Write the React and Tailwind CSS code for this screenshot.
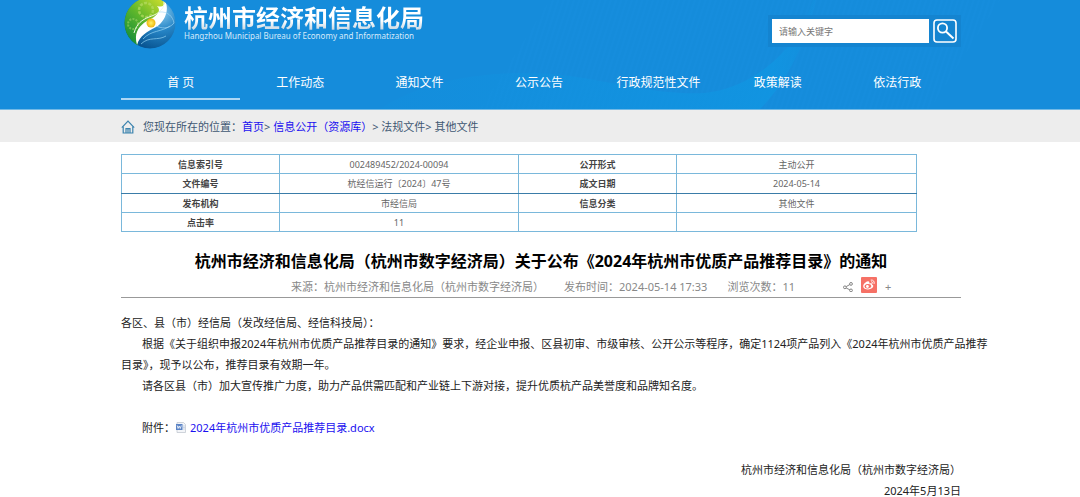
import React, { useState } from 'react';

const NAV_ITEMS = [
  '首 页',
  '工作动态',
  '通知文件',
  '公示公告',
  '行政规范性文件',
  '政策解读',
  '依法行政',
];

const INFO_ROWS = [
  ['信息索引号', '002489452/2024-00094', '公开形式', '主动公开'],
  ['文件编号', '杭经信运行〔2024〕47号', '成文日期', '2024-05-14'],
  ['发布机构', '市经信局', '信息分类', '其他文件'],
  ['点击率', '11', '', ''],
];

function HeaderWaves() {
  return (
    <svg
      className="absolute inset-0 w-full h-full"
      viewBox="0 0 1080 109"
      preserveAspectRatio="none"
      aria-hidden="true"
    >
      <defs>
        <pattern id="stripes" width="5" height="5" patternUnits="userSpaceOnUse" patternTransform="rotate(18)">
          <path d="M1 0V5" stroke="#1d96e2" strokeWidth="1" opacity="0.25" />
        </pattern>
        <linearGradient id="wave" x1="0" x2="1" y1="0" y2="0">
          <stop offset="0" stopColor="#1093e0" stopOpacity="0.2" />
          <stop offset="0.9" stopColor="#1096e2" stopOpacity="0.8" />
          <stop offset="1" stopColor="#1096e2" stopOpacity="0.2" />
        </linearGradient>
      </defs>
      <path d="M550 0H1000L930 109H480Z" fill="url(#stripes)" />
      <path
        d="M380 109C430 75 510 68 570 76C630 85 660 95 705 93C750 88 795 55 813 0H816C808 40 785 85 760 109Z"
        fill="url(#wave)"
      />
    </svg>
  );
}

function Logo() {
  return (
    <svg className="w-[52px] h-[52px] flex-none" viewBox="0 0 52 52" aria-hidden="true">
      <defs>
        <radialGradient id="blueBall" cx="0.72" cy="0.3" r="0.75">
          <stop offset="0" stopColor="#86c9ee" />
          <stop offset="0.45" stopColor="#2685c6" />
          <stop offset="1" stopColor="#075390" />
        </radialGradient>
        <linearGradient id="greenLeaf" x1="0.8" x2="0.1" y1="0" y2="0.9">
          <stop offset="0" stopColor="#c5db2c" />
          <stop offset="0.5" stopColor="#5cb52b" />
          <stop offset="1" stopColor="#128c3b" />
        </linearGradient>
        <radialGradient id="sun">
          <stop offset="0" stopColor="#fff36a" />
          <stop offset="1" stopColor="#f0b50c" />
        </radialGradient>
        <clipPath id="ball">
          <circle cx="26" cy="26" r="25.5" />
        </clipPath>
      </defs>
      <g clipPath="url(#ball)">
        <circle cx="26" cy="26" r="26" fill="url(#blueBall)" />
        <path d="M40 0C45 10 40 17 31 21C18 27 12 34 14 50L0 46V0Z" fill="url(#greenLeaf)" />
        <circle cx="22" cy="13" r="7" fill="none" stroke="#b7dc63" strokeWidth="2.5" strokeDasharray="3 1.4" opacity="0.7" />
        <circle cx="9" cy="27" r="5" fill="none" stroke="#9dd264" strokeWidth="2" strokeDasharray="2 1.2" opacity="0.6" />
        <path d="M40 2C47 12 40 26 32 30C23 35 16 38 13 48C9 34 17 27 25 23C37 17 36 12 33 9C39 11 42 8 40 2Z" fill="#fff" />
        <path d="M40 4C41 14 31 18 25 20C18 23 13 26 10 36" fill="none" stroke="#eef8e4" strokeWidth="1" />
        <path d="M46 29C38 35 27 33 19 42M42 39C34 44 25 39 17 47" fill="none" stroke="#8fcff1" strokeWidth="0.9" opacity="0.8" />
        <path d="M35 15C44 14 49 20 50 26C44 33 37 31 32 29" fill="none" stroke="#a5daf5" strokeWidth="0.8" opacity="0.8" />
      </g>
      <circle cx="27" cy="26" r="4.5" fill="url(#sun)" />
    </svg>
  );
}

function HomeIcon() {
  return (
    <svg
      className="w-[14px] h-[14px] flex-none"
      viewBox="0 0 14 14"
      fill="none"
      stroke="#3b83ae"
      strokeWidth="1.2"
      aria-hidden="true"
    >
      <path d="M0.8 7.6L7 1.2L13.2 7.6" />
      <path d="M2.2 6.5V13H11.8V6.5" />
      <path d="M5 13V8.6H9V13M7 9V13" />
    </svg>
  );
}

function ShareIcon() {
  return (
    <svg className="w-[10px] h-[10px]" viewBox="0 0 10 10" fill="none" stroke="#777" strokeWidth="0.9" aria-hidden="true">
      <path d="M3.2 4.6L6.8 2.6M3.2 6L6.8 7.8" />
      <circle cx="1.9" cy="5.3" r="1.4" />
      <circle cx="8" cy="1.9" r="1.4" />
      <circle cx="8" cy="8.4" r="1.4" />
    </svg>
  );
}

function WeiboIcon() {
  return (
    <svg className="w-4 h-4" viewBox="0 0 16 16" aria-hidden="true">
      <rect width="16" height="16" rx="1" fill="#f67166" />
      <path
        d="M6.9 4.2C5 4.5 2.2 7.1 2.2 9.2C2.2 11.3 4.6 12.4 7 12.4C10.2 12.4 12.3 10.7 12.3 9.1C12.3 8.2 11.6 7.8 10.9 7.5C11.3 6.3 10.4 5.9 8.3 6.5C8.6 5.2 8.3 4 6.9 4.2Z"
        fill="#fff"
      />
      <ellipse cx="6.9" cy="9.3" rx="3.4" ry="2.2" fill="#f67166" transform="rotate(-8 6.9 9.3)" />
      <circle cx="6.4" cy="9.5" r="1.4" fill="#fff" />
      <path d="M9.7 3.1C12 2.6 13.8 4.4 13.1 6.9M10 4.9C11.3 4.6 11.9 5.4 11.6 6.5" fill="none" stroke="#fff" strokeWidth="0.9" />
    </svg>
  );
}

function DocIcon() {
  return (
    <svg className="w-[11px] h-[11px] mr-1 inline-block align-[-1px]" viewBox="0 0 11 11" aria-hidden="true">
      <path d="M2 0.5H8.5L10.5 2.5V10.5H2Z" fill="#f3f5f8" stroke="#c3c9d2" strokeWidth="0.8" />
      <rect x="1" y="2" width="6.5" height="6" fill="#5b84c6" />
      <path d="M2.2 3.5L3.1 6.5L4.2 4L5.3 6.5L6.3 3.5" fill="none" stroke="#fff" strokeWidth="0.8" />
      <path d="M8.3 4H9.6M8.3 5.5H9.6M8.3 7H9.6" stroke="#8ea7cf" strokeWidth="0.6" />
    </svg>
  );
}

function SearchForm() {
  const [keyword, setKeyword] = useState('');

  return (
    <form
      onSubmit={e => e.preventDefault()}
      className="mt-[15px] flex h-8 items-center gap-1 bg-[#1484d0] px-1"
    >
      <input
        type="text"
        aria-label="请输入关键字"
        placeholder="请输入关键字"
        value={keyword}
        onChange={e => setKeyword(e.target.value)}
        className="h-6 w-[157px] bg-white px-[7px] text-[9px] text-gray-700 placeholder:text-[#777] outline-none"
      />
      <button type="submit" aria-label="搜索" className="h-6 w-6">
        <svg viewBox="0 0 24 24" fill="none" stroke="#fff" aria-hidden="true">
          <rect x="1" y="1" width="22" height="22" rx="3" strokeWidth="1.6" />
          <circle cx="9.5" cy="9" r="4.6" strokeWidth="1.8" />
          <path d="M13 12.5L20.5 19.5" strokeWidth="2" />
        </svg>
      </button>
    </form>
  );
}

function Header() {
  return (
    <header className="relative border-b border-[#72b9e6] bg-[#158cdb] text-white">
      <HeaderWaves />
      <div className="relative mx-auto max-w-[842px] pl-0.5">
        <div className="flex h-[66px] items-start justify-between overflow-hidden">
          <div className="-mt-[3px] flex items-start gap-2 pl-[3px]">
            <Logo />
            <div className="pt-2">
              <h1 className="bg-gradient-to-b from-white from-60% to-[#c3d3df] bg-clip-text text-2xl leading-[26px] font-bold text-transparent">
                杭州市经济和信息化局
              </h1>
              <p className="mt-px text-[8px] leading-2 whitespace-nowrap text-[#d5eafa]">
                Hangzhou Municipal Bureau of Economy and Informatization
              </p>
            </div>
          </div>
          <SearchForm />
        </div>
        <nav className="grid h-[43px] grid-cols-7 items-start pr-1 text-center text-xs">
          {NAV_ITEMS.map((item, i) => (
            <a
              key={item}
              href="#"
              className={
                i === 0
                  ? 'h-[34px] border-b-2 border-[#add7f5] leading-[34px]'
                  : 'h-[34px] border-b-2 border-transparent leading-[34px]'
              }
            >
              {item}
            </a>
          ))}
        </nav>
      </div>
    </header>
  );
}

function Breadcrumb() {
  return (
    <div className="bg-[#ededed] text-[11px] text-[#3f5873]">
      <div className="mx-auto flex h-8 max-w-[842px] items-center gap-2 pt-0.5 pl-0.5">
        <HomeIcon />
        <p>
          您现在所在的位置：
          <a href="#" className="text-[#1a10f0]">首页</a>&gt;{' '}
          <a href="#" className="text-[#1a10f0]">信息公开（资源库）</a>&gt; 法规文件&gt; 其他文件
        </p>
      </div>
    </div>
  );
}

function InfoTable() {
  return (
    <table className="h-[78px] w-[796px] table-fixed border-collapse text-center text-[9px] leading-3">
      <colgroup>
        <col className="w-[158px]" />
        <col className="w-[239px]" />
        <col className="w-[158px]" />
        <col className="w-[240px]" />
      </colgroup>
      <tbody>
        {INFO_ROWS.map((row, i) => (
          <tr key={row[0]}>
            {row.map((text, j) => {
              const Cell = j % 2 === 0 ? 'th' : 'td';
              return (
                <Cell
                  key={j}
                  className={`border border-[#7ab8db] pt-0.5 ${
                    j % 2 === 0 ? 'font-bold text-[#444]' : 'text-[#666]'
                  } ${i === 1 ? 'border-b-[#3a7ca8]' : ''} ${i === 2 ? 'border-t-[#3a7ca8]' : ''}`}
                >
                  {text}
                </Cell>
              );
            })}
          </tr>
        ))}
      </tbody>
    </table>
  );
}

function App() {
  return (
    <div className="min-h-screen bg-white font-['Noto_Sans','Noto_Sans_CJK_SC',sans-serif] text-black">
      <Header />
      <Breadcrumb />
      <main className="mx-auto max-w-[842px] pt-3 pl-0.5">
        <InfoTable />
        <h2 className="mt-[17px] text-center text-base leading-6 font-bold">
          杭州市经济和信息化局（杭州市数字经济局）关于公布《2024年杭州市优质产品推荐目录》的通知
        </h2>
        <div className="flex h-[25px] items-center border-b border-[#999] pt-1 pl-[170px] text-[11px] whitespace-nowrap text-[#888]">
          <span className="mr-5">来源：杭州市经济和信息化局（杭州市数字经济局）</span>
          <span className="mr-5">发布时间：2024-05-14 17:33</span>
          <span className="mr-12">浏览次数：11</span>
          <button type="button" aria-label="分享" className="mr-2">
            <ShareIcon />
          </button>
          <button type="button" aria-label="微博" className="mr-2 mb-1">
            <WeiboIcon />
          </button>
          <button type="button" aria-label="更多">+</button>
        </div>
        <article className="pt-[14px] text-[11px] leading-[21px] text-[#222]">
          <p>各区、县（市）经信局（发改经信局、经信科技局）：</p>
          <p className="-mr-8 indent-[21px]">
            根据《关于组织申报2024年杭州市优质产品推荐目录的通知》要求，经企业申报、区县初审、市级审核、公开公示等程序，确定1124项产品列入《2024年杭州市优质产品推荐目录》，现予以公布，推荐目录有效期一年。
          </p>
          <p className="indent-[21px]">
            请各区县（市）加大宣传推广力度，助力产品供需匹配和产业链上下游对接，提升优质杭产品美誉度和品牌知名度。
          </p>
          <p className="mt-[21px] indent-[21px]">
            附件：
            <DocIcon />
            <a href="#" className="text-[#1a10f0]">2024年杭州市优质产品推荐目录.docx</a>
          </p>
          <div className="mt-[21px] text-right">
            <p>杭州市经济和信息化局（杭州市数字经济局）</p>
            <p>2024年5月13日</p>
          </div>
        </article>
      </main>
    </div>
  );
}

export default App;
